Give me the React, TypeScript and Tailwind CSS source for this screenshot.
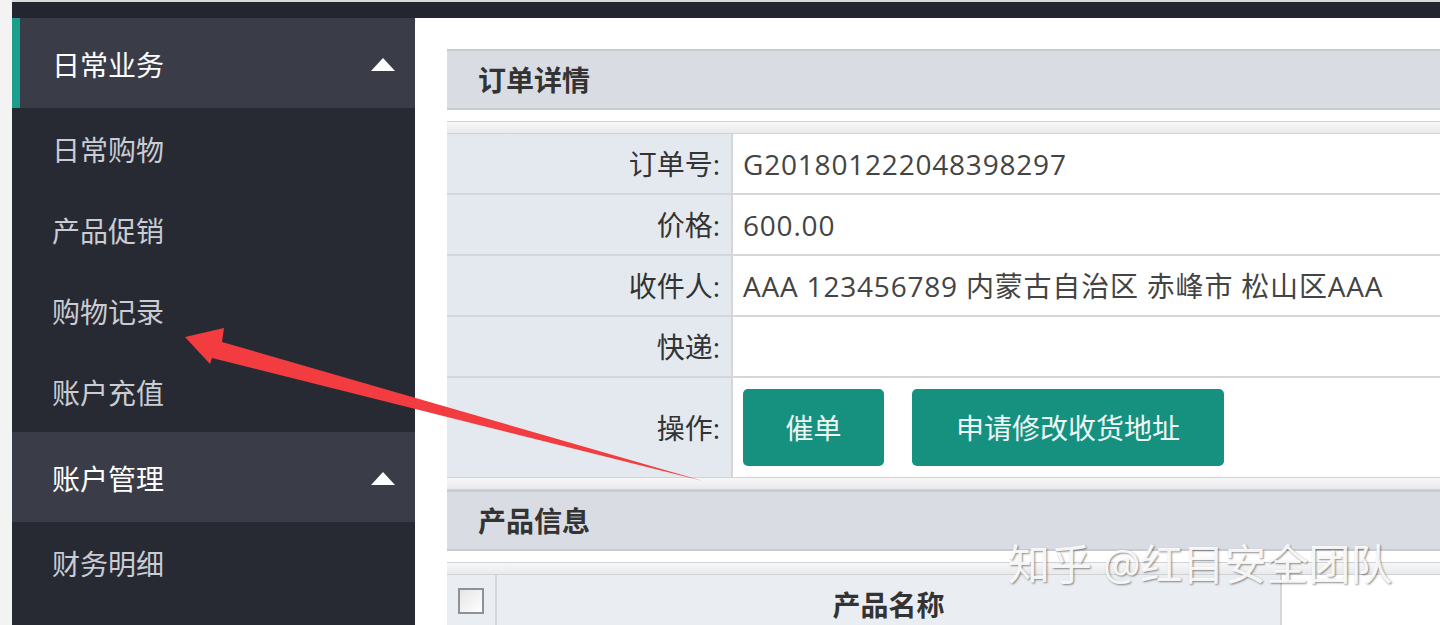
import React from 'react';

const menuGroups = [
  { title: '日常业务', active: true, items: ['日常购物', '产品促销', '购物记录', '账户充值'] },
  { title: '账户管理', active: false, items: ['财务明细'] },
];

const rows = [
  { label: '订单号:', value: 'G201801222048398297' },
  { label: '价格:', value: '600.00' },
  { label: '收件人:', value: 'AAA 123456789 内蒙古自治区 赤峰市 松山区AAA' },
  { label: '快递:', value: '' },
];

function Strip() {
  return <div className="h-[13px] border-y border-[#cfd2d6] bg-gradient-to-b from-[#f7f7f7] to-[#e9eaec]" />;
}

function PanelTitle({ title }: { title: string }) {
  return (
    <div className="h-[61px] border-y-2 border-[#c8ccd1] bg-[#d9dde3] flex items-center pl-[31px]">
      <span className="text-[28px] font-bold text-[#333]">{title}</span>
    </div>
  );
}

export default function App() {
  return (
    <div className="relative w-[1440px] h-[625px] overflow-hidden bg-[#f3f3f3] pl-[12px] flex flex-col font-['Open_Sans','Noto_Sans_CJK_SC',sans-serif]">
      {/* top bar */}
      <div className="h-[18px] shrink-0 bg-[#23262f] border-t-2 border-[#d9d9d9]" />

      <div className="flex flex-1 min-h-0">
        {/* Sidebar */}
        <aside className="w-[403px] shrink-0 bg-[#272a33]">
          {menuGroups.map((g) => (
            <div key={g.title}>
              <div
                className={`h-[90px] bg-[#3a3d48] flex items-center justify-between pr-[20px] pt-[3px] ${
                  g.active ? 'border-l-8 border-[#1a9f8c] pl-[32px]' : 'pl-[40px]'
                }`}
              >
                <span className="text-[28px] text-white">{g.title}</span>
                <svg width="24" height="13" viewBox="0 0 24 13">
                  <polygon points="12,0 24,13 0,13" fill="#ffffff" />
                </svg>
              </div>
              {g.items.map((it) => (
                <div key={it} className="h-[81px] flex items-center pl-[40px] pt-[3px]">
                  <span className="text-[28px] text-[#c9ccd3]">{it}</span>
                </div>
              ))}
            </div>
          ))}
        </aside>

        {/* Main */}
        <main className="flex-1 min-w-0 bg-white pl-[32px] pt-[31px] overflow-hidden">
          <div className="w-[1200px]">
            <PanelTitle title="订单详情" />
            <div className="h-[11px]" />
            <Strip />
            {rows.map((r) => (
              <div key={r.label} className="flex h-[61px] border-b-2 border-[#d3d6da]">
                <div className="w-[286px] shrink-0 bg-[#e4e9ef] border-r-2 border-[#d3d6da] flex items-center justify-end pr-[11px]">
                  <span className="text-[28px] text-[#333]">{r.label}</span>
                </div>
                <div className="flex-1 flex items-center pl-[10px]">
                  <span className="text-[28px] text-[#444] tracking-[0.8px]">{r.value}</span>
                </div>
              </div>
            ))}
            <div className="flex h-[99px]">
              <div className="w-[286px] shrink-0 bg-[#e4e9ef] border-r-2 border-[#d3d6da] flex items-center justify-end pr-[11px]">
                <span className="text-[28px] text-[#333]">操作:</span>
              </div>
              <div className="flex-1 flex items-center pl-[10px] gap-[28px]">
                <button className="w-[141px] h-[77px] rounded-[5px] bg-[#17917f] text-[#eef7f5] text-[28px]">催单</button>
                <button className="w-[312px] h-[77px] rounded-[5px] bg-[#17917f] text-[#eef7f5] text-[28px]">申请修改收货地址</button>
              </div>
            </div>
            <Strip />
            <PanelTitle title="产品信息" />
            <div className="h-[11px]" />
            <Strip />
            <div className="flex h-[60px] bg-[#eaeef3] border-b border-[#d3d6da]">
              <div className="w-[50px] shrink-0 border-r-2 border-[#d3d6da] flex items-start justify-center pt-[13px]">
                <div className="w-[26px] h-[26px] border-2 border-[#8e9196] bg-gradient-to-br from-[#e6e6e6] to-[#ffffff]" />
              </div>
              <div className="w-[785px] shrink-0 border-r-2 border-[#d3d6da] flex items-start justify-center pt-[9px]">
                <span className="text-[28px] font-bold text-[#333]">产品名称</span>
              </div>
              <div className="flex-1 bg-white" />
            </div>
          </div>
        </main>
      </div>

      {/* annotation arrow */}
      <svg className="absolute left-0 top-0 pointer-events-none" width="1440" height="625" viewBox="0 0 1440 625">
        <polygon
          points="185,337 224,328 222,342 703,481 212,358 210,364"
          fill="#f23c3f"
        />
      </svg>

      {/* watermark */}
      <div className="absolute left-[1008px] top-[532px] text-[42px] text-white/90 [text-shadow:1px_1px_2px_rgba(0,0,0,0.45)] pointer-events-none whitespace-nowrap">
        知乎 @红目安全团队
      </div>
    </div>
  );
}
